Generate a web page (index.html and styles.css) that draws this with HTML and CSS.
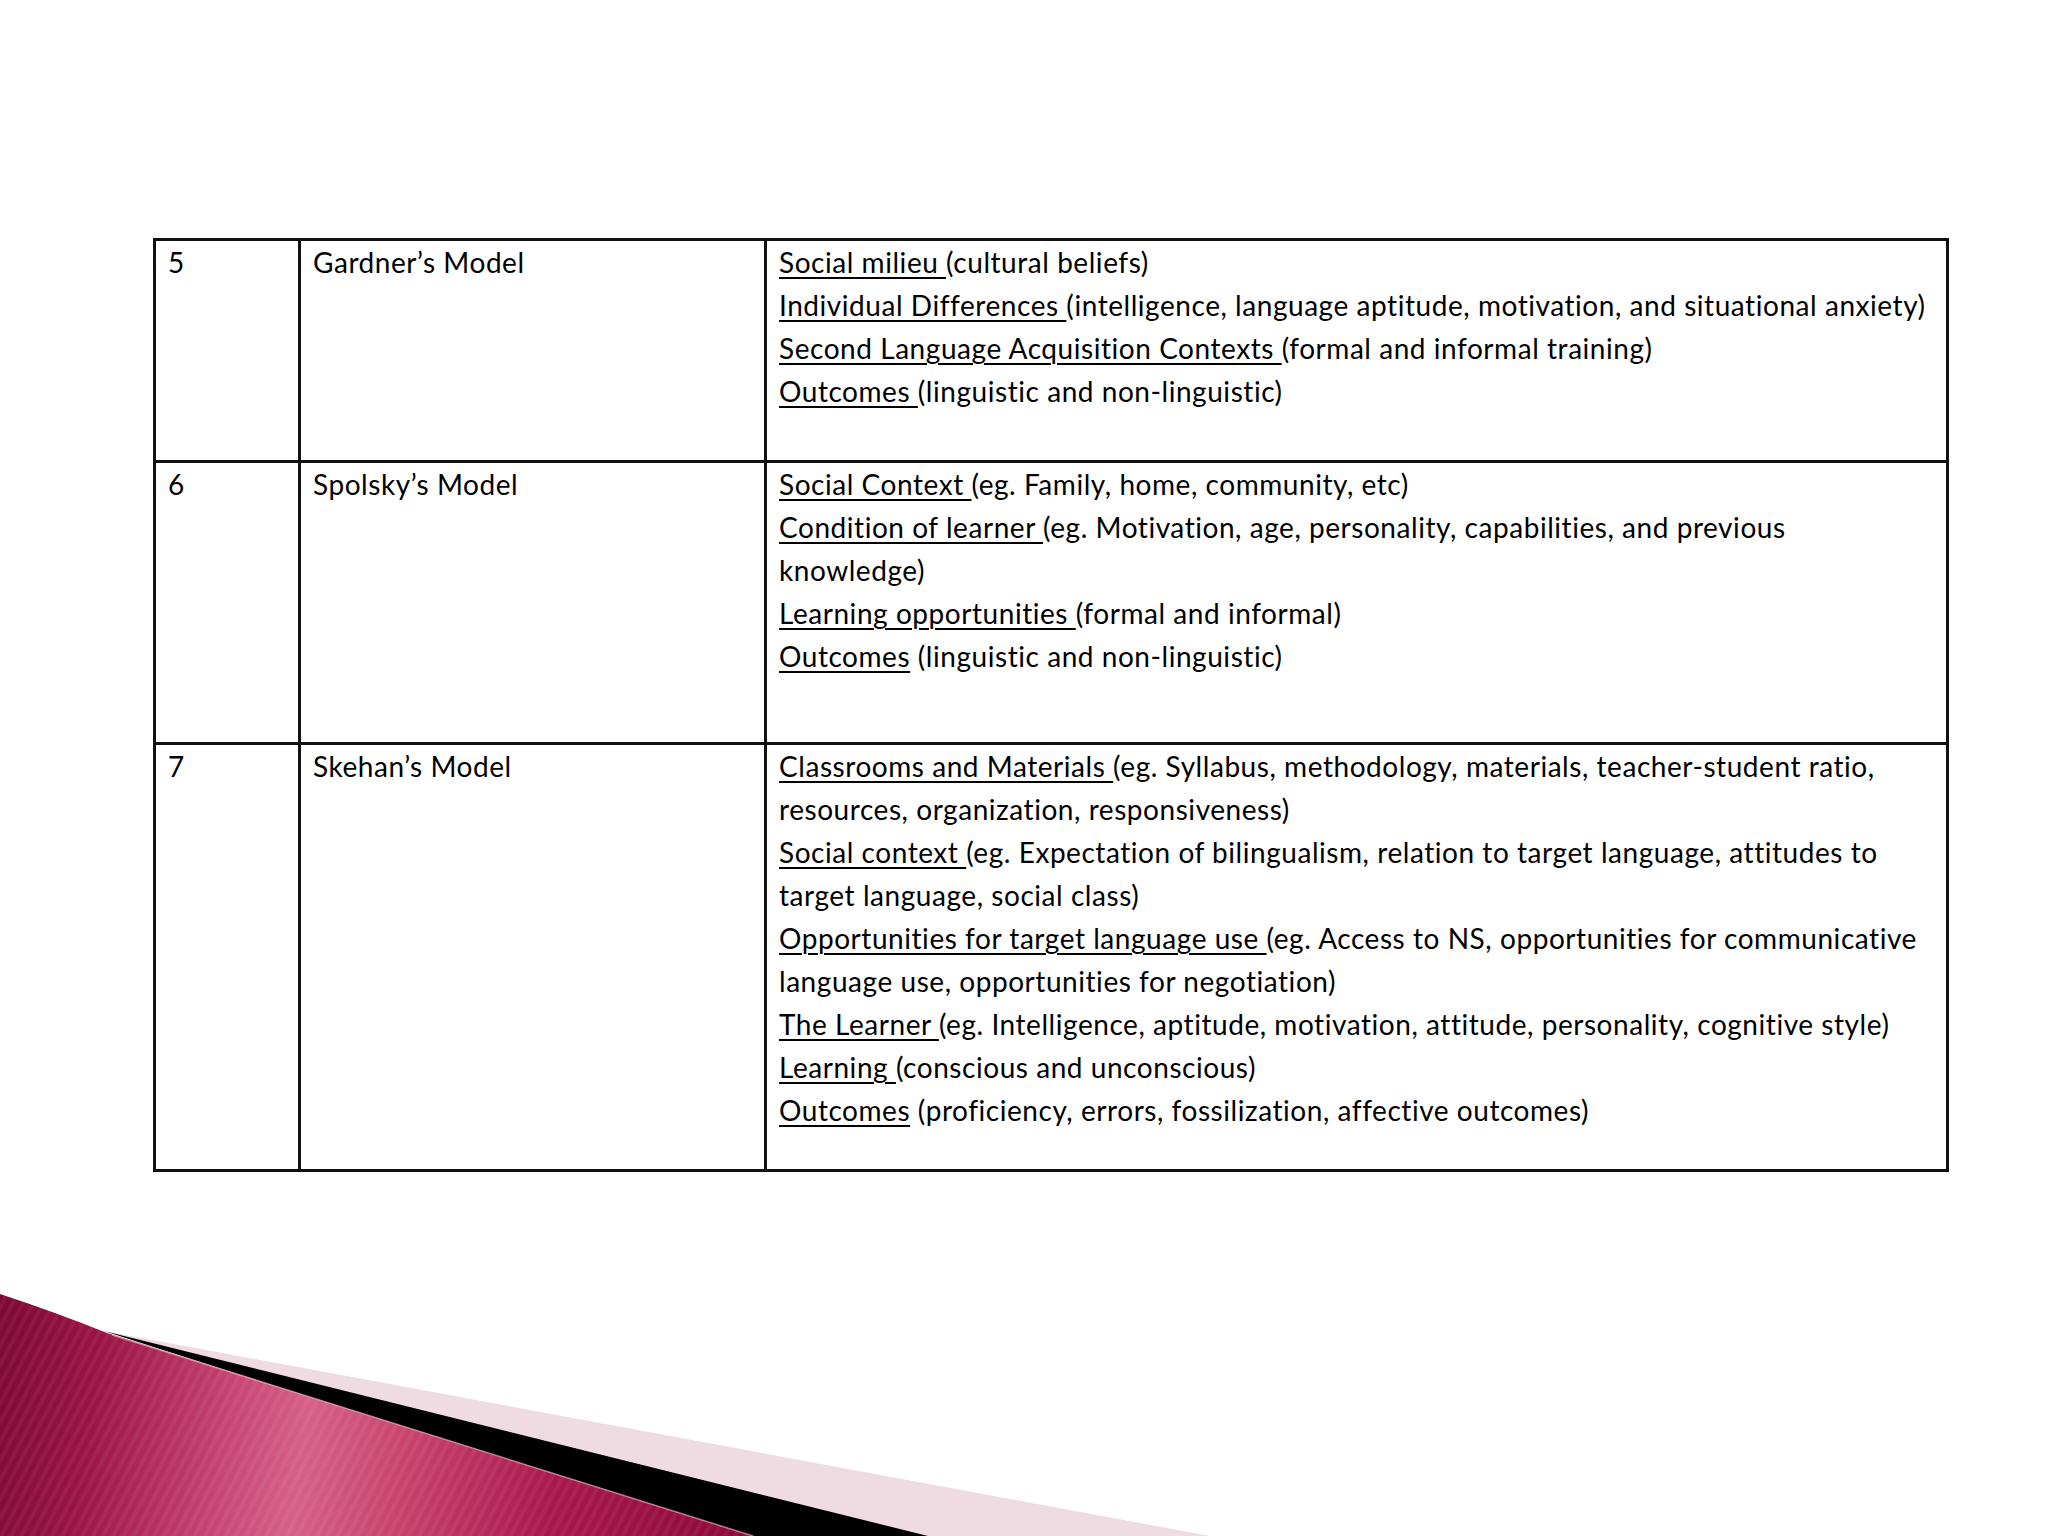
FILE: index.html
```html
<!DOCTYPE html>
<html lang="en">
<head>
<meta charset="utf-8">
<title>Models</title>
<link rel="stylesheet" href="styles.css">
</head>
<body>
<div class="slide">
  <table class="models">
    <colgroup>
      <col class="c-num">
      <col class="c-name">
      <col class="c-desc">
    </colgroup>
    <tr class="r1">
      <td>5</td>
      <td>Gardner’s Model</td>
      <td>
        <div class="item"><u>Social milieu </u>(cultural beliefs)</div>
        <div class="item"><u>Individual Differences </u>(intelligence, language aptitude, motivation, and situational anxiety)</div>
        <div class="item"><u>Second Language Acquisition Contexts </u>(formal and informal training)</div>
        <div class="item"><u>Outcomes </u>(linguistic and non-linguistic)</div>
      </td>
    </tr>
    <tr class="r2">
      <td>6</td>
      <td>Spolsky’s Model</td>
      <td>
        <div class="item"><u>Social Context </u>(eg. Family, home, community, etc)</div>
        <div class="item"><u>Condition of learner </u>(eg. Motivation, age, personality, capabilities, and previous<br>knowledge)</div>
        <div class="item"><u>Learning opportunities </u>(formal and informal)</div>
        <div class="item"><u>Outcomes</u> (linguistic and non-linguistic)</div>
      </td>
    </tr>
    <tr class="r3">
      <td>7</td>
      <td>Skehan’s Model</td>
      <td>
        <div class="item"><u>Classrooms and Materials </u>(eg. Syllabus, methodology, materials, teacher-student ratio,<br>resources, organization, responsiveness)</div>
        <div class="item"><u>Social context </u>(eg. Expectation of bilingualism, relation to target language, attitudes to<br>target language, social class)</div>
        <div class="item"><u>Opportunities for target language use </u>(eg. Access to NS, opportunities for communicative<br>language use, opportunities for negotiation)</div>
        <div class="item"><u>The Learner </u>(eg. Intelligence, aptitude, motivation, attitude, personality, cognitive style)</div>
        <div class="item"><u>Learning </u>(conscious and unconscious)</div>
        <div class="item"><u>Outcomes</u> (proficiency, errors, fossilization, affective outcomes)</div>
      </td>
    </tr>
  </table>

  <svg class="ribbon" width="1240" height="256" viewBox="0 1280 1240 256" aria-hidden="true">
    <defs>
      <linearGradient id="mag" gradientUnits="userSpaceOnUse" x1="0" y1="1300" x2="760" y2="1420">
        <stop offset="0" stop-color="#7e0834"/>
        <stop offset="0.14" stop-color="#9a1444"/>
        <stop offset="0.32" stop-color="#c84674"/>
        <stop offset="0.42" stop-color="#d66088"/>
        <stop offset="0.55" stop-color="#c8446f"/>
        <stop offset="0.75" stop-color="#a8184c"/>
        <stop offset="1" stop-color="#8c0a3a"/>
      </linearGradient>
      <pattern id="stripes" patternUnits="userSpaceOnUse" width="9" height="9" patternTransform="rotate(28)">
        <rect width="4" height="9" fill="#ffffff" opacity="0.05"/>
      </pattern>
    </defs>
    <path d="M104,1331 L1210,1536 L900,1536 Z" fill="#f0dbe2"/>
    <path d="M104,1331 L928,1536 L740,1536 Z" fill="#000000"/>
    <path d="M0,1294 Q55,1312 107,1333 L753,1536 L0,1536 Z" fill="url(#mag)"/>
    <path d="M0,1294 Q55,1312 107,1333 L753,1536 L0,1536 Z" fill="url(#stripes)"/>
    <path d="M112,1335 L753,1536" stroke="#f2a6be" stroke-width="1.5" opacity="0.7" fill="none"/>
  </svg>
</div>
</body>
</html>
```

FILE: styles.css
```css
html, body {
  margin: 0;
  padding: 0;
  background: #ffffff;
}

.slide {
  position: relative;
  width: 2048px;
  height: 1536px;
  overflow: hidden;
  background: #ffffff;
  padding-top: 238px;
  padding-left: 153px;
  box-sizing: border-box;
}

.models {
  border-collapse: collapse;
  table-layout: fixed;
  width: 1793px;
  font-family: Lato, "Open Sans", sans-serif;
  font-size: 28px;
  letter-spacing: 0.55px;
  font-variant-ligatures: none;
  line-height: 43px;
  color: #000000;
}

.c-num { width: 145px; }
.c-name { width: 466px; }
.c-desc { width: 1182px; }

.models td {
  border: 3px solid #111111;
  vertical-align: top;
  padding: 0 12px;
  white-space: nowrap;
}

.r1 td { height: 219px; }
.r2 td { height: 279px; }
.r3 td { height: 424px; }

.item u {
  text-decoration: underline;
  text-decoration-thickness: 2px;
  text-underline-offset: 4px;
}

.ribbon {
  position: absolute;
  left: 0;
  bottom: 0;
  display: block;
}
```
